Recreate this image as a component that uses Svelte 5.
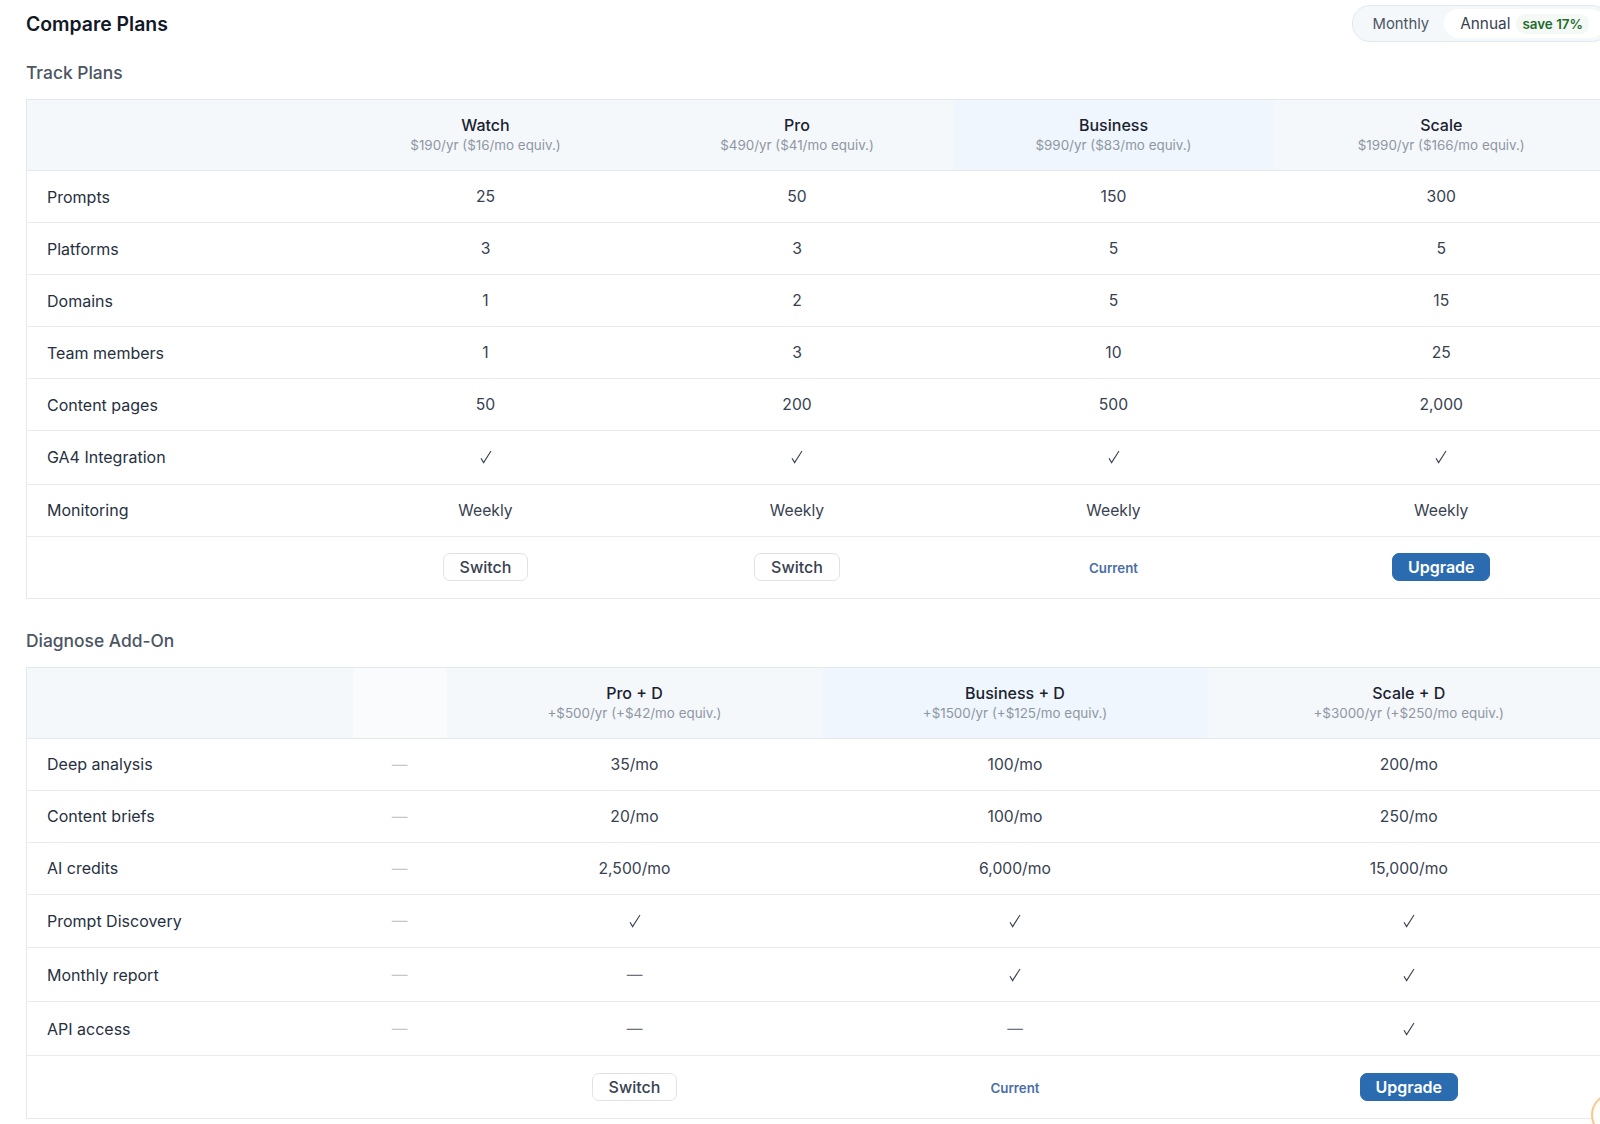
<script>
  const trackPlans = [
    { name: 'Watch', price: '$190/yr ($16/mo equiv.)' },
    { name: 'Pro', price: '$490/yr ($41/mo equiv.)' },
    { name: 'Business', price: '$990/yr ($83/mo equiv.)', current: true },
    { name: 'Scale', price: '$1990/yr ($166/mo equiv.)' }
  ];

  const trackRows = [
    { label: 'Prompts', values: ['25', '50', '150', '300'] },
    { label: 'Platforms', values: ['3', '3', '5', '5'] },
    { label: 'Domains', values: ['1', '2', '5', '15'] },
    { label: 'Team members', values: ['1', '3', '10', '25'] },
    { label: 'Content pages', values: ['50', '200', '500', '2,000'] },
    { label: 'GA4 Integration', check: true, values: ['✓', '✓', '✓', '✓'] },
    { label: 'Monitoring', values: ['Weekly', 'Weekly', 'Weekly', 'Weekly'] }
  ];

  const trackActions = ['switch', 'switch', 'current', 'upgrade'];

  const diagnosePlans = [
    { name: '', price: '', empty: true },
    { name: 'Pro + D', price: '+$500/yr (+$42/mo equiv.)' },
    { name: 'Business + D', price: '+$1500/yr (+$125/mo equiv.)', current: true },
    { name: 'Scale + D', price: '+$3000/yr (+$250/mo equiv.)' }
  ];

  const diagnoseRows = [
    { label: 'Deep analysis', values: ['—', '35/mo', '100/mo', '200/mo'] },
    { label: 'Content briefs', values: ['—', '20/mo', '100/mo', '250/mo'] },
    { label: 'AI credits', values: ['—', '2,500/mo', '6,000/mo', '15,000/mo'] },
    { label: 'Prompt Discovery', check: true, values: ['—', '✓', '✓', '✓'] },
    { label: 'Monthly report', check: true, values: ['—', '—', '✓', '✓'] },
    { label: 'API access', check: true, values: ['—', '—', '—', '✓'] }
  ];

  const diagnoseActions = ['', 'switch', 'current', 'upgrade'];

  const tables = [
    { title: 'Track Plans', cols: [304, 310, 313, 320, 336], plans: trackPlans, rows: trackRows, actions: trackActions },
    { title: 'Diagnose Add-On', cols: [326, 94, 376, 385, 403], plans: diagnosePlans, rows: diagnoseRows, actions: diagnoseActions }
  ];
</script>

<div class="page">
  <div class="head">
    <h2>Compare Plans</h2>
    <div class="toggle">
      <span class="opt">Monthly</span>
      <span class="opt active">Annual <span class="save">save 17%</span></span>
    </div>
  </div>

  {#each tables as t}
    <section>
      <h3>{t.title}</h3>
      <table>
        <colgroup>
          {#each t.cols as w}
            <col style="width: {w}px" />
          {/each}
        </colgroup>
        <thead>
          <tr>
            <th></th>
            {#each t.plans as p}
              <th class:current={p.current} class:empty={p.empty}>
                {#if p.name}
                  <div class="plan">{p.name}</div>
                  <div class="price">{p.price}</div>
                {/if}
              </th>
            {/each}
          </tr>
        </thead>
        <tbody>
          {#each t.rows as r}
            <tr class:check-row={r.check}>
              <td class="label">{r.label}</td>
              {#each r.values as v, i}
                <td class:dash={v === '—'} class:muted={v === '—' && i === 0 && t.plans[0].empty}>
                  {#if v === '✓'}
                    <svg class="tick" viewBox="0 0 12 14" width="12" height="14" role="img" aria-label="Included">
                      <path d="M1 8.2 L3.6 12.6 L11 1" />
                    </svg>
                  {:else}
                    {v}
                  {/if}
                </td>
              {/each}
            </tr>
          {/each}
          <tr class="actions">
            <td></td>
            {#each t.actions as a}
              <td>
                {#if a === 'switch'}
                  <button class="btn">Switch</button>
                {:else if a === 'upgrade'}
                  <button class="btn primary">Upgrade</button>
                {:else if a === 'current'}
                  <span class="cur">Current</span>
                {/if}
              </td>
            {/each}
          </tr>
        </tbody>
      </table>
    </section>
  {/each}

  <div class="bubble"></div>
</div>

<style>
  :global(body) {
    margin: 0;
    background: #fff;
    overflow: hidden;
  }

  .page {
    position: relative;
    box-sizing: border-box;
    width: 1600px;
    height: 1124px;
    overflow: hidden;
    padding-left: 26px;
    font-family: Inter, 'Liberation Sans', sans-serif;
    color: #1f2937;
  }

  .head {
    display: flex;
    align-items: center;
    justify-content: space-between;
    width: 1584px;
    height: 47px;
  }

  h2 {
    margin: 0;
    font-size: 19.4px;
    font-weight: 600;
    color: #111827;
  }

  .toggle {
    display: flex;
    align-items: center;
    flex: none;
    box-sizing: border-box;
    height: 37px;
    padding: 3px 4px;
    border: 1px solid #e2e8f0;
    border-radius: 18px;
    background: #f5f8fb;
    font-size: 14.8px;
  }

  .opt {
    padding: 0 15px 0 16px;
    color: #4b5563;
  }

  .opt.active {
    display: flex;
    align-items: center;
    height: 29px;
    padding: 0 16px;
    border-radius: 15px;
    background: #fff;
    font-size: 15.4px;
    color: #374151;
  }

  .save {
    margin-left: 6px;
    padding: 2px 6px;
    border-radius: 9px;
    background: #f5f9f6;
    font-size: 13.4px;
    font-weight: 600;
    color: #1f6b2e;
  }

  h3 {
    margin: 0;
    padding: 16px 0 16px;
    font-size: 17.4px;
    font-weight: 500;
    line-height: 20px;
    color: #4b5563;
  }

  section + section h3 {
    padding-top: 32px;
    padding-bottom: 16px;
  }

  table {
    table-layout: fixed;
    width: 1581px;
    border-collapse: collapse;
    border: 1px solid #e2e8f0;
    font-size: 15.7px;
  }

  th {
    height: 70px;
    padding: 0;
    background: #f5f8fb;
    border-bottom: 1px solid #e5e9ef;
    font-weight: 400;
  }

  th.current {
    background: #eff6fd;
  }

  th.empty {
    background: #fafbfd;
  }

  .plan {
    font-size: 16px;
    font-weight: 500;
    line-height: 20px;
    color: #1a2230;
  }

  .price {
    font-size: 13.4px;
    line-height: 20px;
    color: #8e96a3;
  }

  td {
    height: 51px;
    padding: 0;
    text-align: center;
    border-bottom: 1px solid #e9ebef;
    color: #374151;
  }

  td.label {
    padding-left: 20px;
    font-size: 16px;
    text-align: left;
    color: #27303f;
  }

  td.dash {
    color: #6b7280;
  }

  td.muted {
    color: #c2c7cf;
  }

  .check-row td {
    height: 52.5px;
  }

  section + section .check-row td {
    height: 52.9px;
  }

  .tick {
    display: block;
    margin: 0 auto;
  }

  .tick path {
    fill: none;
    stroke: #374151;
    stroke-width: 1.1;
  }

  .actions td {
    height: 61px;
  }

  section + section .actions td {
    height: 62px;
  }

  .btn {
    box-sizing: border-box;
    height: 28px;
    padding: 0 16px;
    border: 1px solid #dfe3e8;
    border-radius: 7px;
    background: #fff;
    font-family: inherit;
    font-size: 16px;
    font-weight: 500;
    color: #374151;
  }

  .btn.primary {
    padding: 0 14.5px;
    border-color: #2b6cb0;
    background: #2b6cb0;
    font-weight: 600;
    color: #fff;
  }

  .cur {
    font-size: 13.3px;
    font-weight: 600;
    color: #4a6fa5;
  }

  .bubble {
    position: absolute;
    left: 1591px;
    top: 1093px;
    width: 44px;
    height: 44px;
    box-sizing: border-box;
    border: 2px solid #f7c78f;
    border-radius: 50%;
    background: #fffdf8;
  }
</style>
